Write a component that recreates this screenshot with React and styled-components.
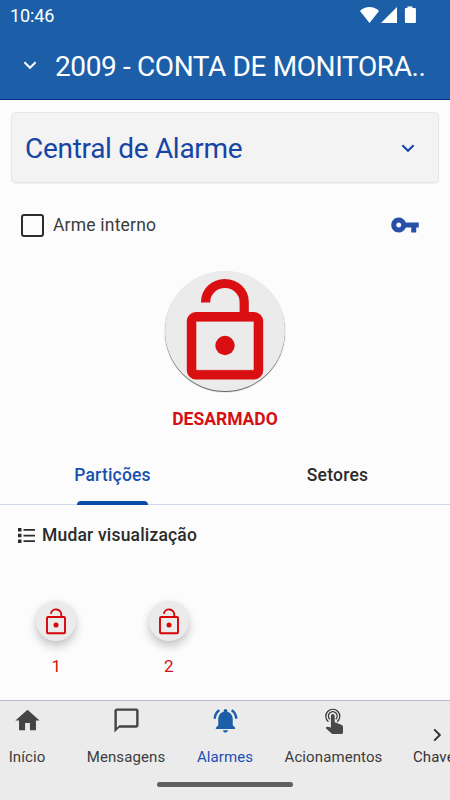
import React from "react";
import styled, { createGlobalStyle } from "styled-components";

const Global = createGlobalStyle`
  * { box-sizing: border-box; }
  html, body { margin: 0; overflow: hidden; background: #fcfcfc; }
  body { font-family: Roboto, sans-serif; color: #2b2b2b; }
  button { font: inherit; border: 0; background: none; padding: 0; margin: 0; color: inherit; }
  svg { display: block; flex: none; }
`;
const Screen = styled.div`
  width: 450px; height: 800px; display: flex; flex-direction: column; overflow: hidden; background: #fcfcfc;
`;
const Header = styled.header`
  height: 100px; flex: none; background: #1c5fa8; border-bottom: 1px solid #04308c; color: #fff;
`;
const StatusBar = styled.div`
  height: 31px; display: flex; justify-content: space-between; padding: 0 33px 0 10px;
`;
const Clock = styled.span`
  font-size: 18px; line-height: 31px; letter-spacing: -0.1px;
`;
const AccountBar = styled.div`
  height: 68px; display: flex; align-items: center; padding-left: 22px; gap: 17px;
`;
const Title = styled.h1`
  margin: 0; padding-top: 2px; font-size: 28px; font-weight: 400; line-height: 67px; letter-spacing: -0.38px; white-space: nowrap;
`;
const Body = styled.main`
  flex: 1; min-height: 0; display: flex; flex-direction: column;
`;
const PanelSelect = styled.button`
  margin: 12px 11px 0; height: 71px; flex: none; display: flex; align-items: center; justify-content: space-between;
  padding: 0 22px 0 13px; background: #f3f3f3; border: 1px solid #e6e6e6; border-radius: 5px; color: #1645a5;
  box-shadow: 0 1px 1px rgba(0,0,0,.05);
`;
const PanelName = styled.span`
  font-size: 28px; line-height: 67px; padding-top: 1px; font-weight: 400; letter-spacing: -0.3px;
`;
const OptionRow = styled.div`
  height: 60px; margin-top: 12px; flex: none; display: flex; align-items: center; justify-content: space-between;
  padding: 0 30px 0 21px;
`;
const CheckLabel = styled.label`
  display: flex; align-items: center; gap: 9px; font-size: 17.5px; font-weight: 400; letter-spacing: 0.2px; color: #3c3c3c;
`;
const CheckBox = styled.span`
  width: 23px; height: 23px; border: 2px solid #2c2c2c; border-radius: 3px;
`;
const KeyButton = styled.button`
  color: #2850a8;
`;
const ArmArea = styled.section`
  height: 195px; flex: none; display: flex; flex-direction: column; align-items: center; padding-top: 16px;
`;
const ArmButton = styled.button`
  width: 120px; height: 120px; flex: none; border-radius: 50%; background: #ebebeb; box-shadow: 0 1px 1px rgba(0,0,0,.65);
`;
const ArmState = styled.strong`
  margin-top: 17px; font-size: 17.5px; line-height: 22px; font-weight: 700; color: #d50f12;
`;
const Tabs = styled.nav`
  height: 55px; flex: none; display: grid; grid-template-columns: 1fr 1fr; box-shadow: inset 0 -1px #d0d8ec;
`;
const Tab = styled.button`
  display: flex; flex-direction: column; justify-content: space-between; align-items: center;
  font-size: 17.5px; line-height: 20px; font-weight: 500; letter-spacing: 0.2px; padding-top: 15px;
  color: ${(p) => (p.$active ? "#1850ae" : "#2b2b2b")};
  &::after {
    content: ""; width: 71px; height: 4px; border-radius: 4px 4px 0 0;
    background: ${(p) => (p.$active ? "#0b4ba8" : "transparent")};
  }
`;
const ViewToggle = styled.button`
  height: 60px; flex: none; display: flex; align-items: center; gap: 7px; padding-left: 18px;
  font-size: 17.5px; font-weight: 500; letter-spacing: 0.18px;
`;
const Partitions = styled.div`
  display: flex; padding: 36px 0 0;
`;
const Partition = styled.div`
  width: 112.5px; display: flex; flex-direction: column; align-items: center;
  font-size: 17px; line-height: 20px; color: #d50f12; gap: 15px;
`;
const PartitionButton = styled.button`
  width: 40px; height: 40px; border-radius: 50%; background: #ebebeb;
  box-shadow: 0 5px 10px rgba(0,0,0,.22), 0 0 3px rgba(0,0,0,.06);
`;
const BottomBar = styled.footer`
  height: 100px; flex: none; background: #ebebeb; border-top: 1px solid #b9b9d0; display: flex; flex-direction: column;
  align-items: center;
`;
const NavRow = styled.nav`
  width: 450px; height: 81px; display: grid; grid-template-columns: 54px 144px 54px 163px 35px; overflow: hidden;
`;
const NavItem = styled.button`
  display: flex; flex-direction: column; align-items: center; font-size: 15px; line-height: 18px; white-space: nowrap;
  padding-top: 5px; gap: 13px; letter-spacing: 0.1px; color: ${(p) => (p.$active ? "#1c5fa8" : "#444")};
`;
const NavText = styled.span`
  color: ${(p) => (p.$active ? "#1a4fb4" : "#3c3c3c")};
`;
const LastItem = styled.button`
  margin-left: -2px; display: flex; flex-direction: column; align-items: flex-start; font-size: 15px; line-height: 18px;
  white-space: nowrap; padding-top: 26px; color: #333; letter-spacing: 0.1px;
`;
const Next = styled.span`
  margin-left: 16px; height: 21px;
`;
const Handle = styled.div`
  width: 136px; height: 5px; border-radius: 3px; background: #5e5e5e;
`;

const icons = {
  home: "M10 20v-6h4v6h5v-8h3L12 3 2 12h3v8z",
  chat: "M20 2H4c-1.1 0-2 .9-2 2v18l4-4h14c1.1 0 2-.9 2-2V4c0-1.1-.9-2-2-2zm0 14H6l-2 2V4h16v12z",
  bell: "M7.58 4.08L6.15 2.65C3.75 4.48 2.17 7.3 2.03 10.5h2c.15-2.65 1.51-4.97 3.55-6.42zm12.39 6.42h2c-.15-3.2-1.73-6.02-4.12-7.85l-1.42 1.43c2.02 1.45 3.39 3.77 3.54 6.42zM18 11c0-3.07-1.64-5.64-4.5-6.32V4c0-.83-.67-1.5-1.5-1.5s-1.5.67-1.5 1.5v.68C7.63 5.36 6 7.92 6 11v5l-2 2v1h16v-1l-2-2v-5zm-6 11c.14 0 .27-.01.4-.04.65-.14 1.18-.58 1.44-1.18.1-.24.15-.5.15-.78h-4c.01 1.1.9 2 2.01 2z",
  key: "M12.65 10C11.83 7.67 9.61 6 7 6c-3.31 0-6 2.69-6 6s2.69 6 6 6c2.61 0 4.83-1.67 5.65-4H17v4h4v-4h2v-4H12.65zM7 14c-1.1 0-2-.9-2-2s.9-2 2-2 2 .9 2 2-.9 2-2 2z",
};
const Icon = ({ name, size = 29 }) => (
  <svg width={size} height={size} viewBox="0 0 24 24" fill="currentColor"><path d={icons[name]} /></svg>
);
const Chevron = ({ right }) => (
  <svg width="16" height="16" viewBox="0 0 16 16" fill="none" stroke="currentColor" strokeWidth="2">
    <path d={right ? "M5.2 2.4 10.8 8 5.2 13.6" : "M2.4 5.2 8 10.8 13.6 5.2"} />
  </svg>
);
const BigLock = () => (
  <svg width="120" height="120" viewBox="0 -0.5 120 120" fill="none" stroke="#d90f11" strokeWidth="9.2">
    <rect x="26.4" y="45.2" width="67.2" height="58.2" rx="4.5" />
    <path d="M40.6 31v-.5a19.3 18.5 0 0 1 38.6 0V45" />
    <path d="M31 49.8h58v49H31z" strokeWidth="0.6" />
    <circle cx="60" cy="74" r="9.7" fill="#d90f11" stroke="none" />
  </svg>
);
const SmallLock = () => (
  <svg width="40" height="40" viewBox="0 0 40 40" fill="none" stroke="#d50508" strokeWidth="1.9">
    <rect x="11" y="16" width="18" height="16.2" rx="1" />
    <path d="M14.8 12.7a5.3 5.3 0 0 1 10.5 1V16" />
    <circle cx="20" cy="24" r="2.5" fill="#d50508" stroke="none" />
  </svg>
);
const SystemIcons = () => (
  <svg width="57" height="31" viewBox="0 0 57 31" fill="#fff">
    <path d="M0 11C5 5.800 14 5.800 19 11L9.500 23z" />
    <path d="M21 23 37 7v16z" />
    <path d="M48 6.500h5v1.500h2.500q1 0 1 1V22q0 1-1 1h-9q-1 0-1-1V9q0-1 1-1H48z" transform="translate(-.6 0)" />
  </svg>
);
const ListIcon = () => (
  <svg width="17" height="15" viewBox="0 0 17 15" fill="#2b2b2b">
    <path d="M0 0h3.500v3.500H0zM0 5.700h3.500v3.500H0zM0 11.400h3.500V15H0zM5.500 1h11.500v1.700H5.500zM5.500 6.700h11.500v1.700H5.500zM5.500 12.300h11.500V14H5.500z" />
  </svg>
);
const Touch = () => (
  <svg width="29" height="29" viewBox="0 -0.5 29 29" fill="none" stroke="#333" strokeWidth="1.2">
    <path d="M9.400 15.200A7 7 0 1 1 18.200 15.200M10.800 12.800A4.400 4.400 0 1 1 16.800 12.800" />
    <path fill="#484848" stroke="none" d="M11.900 9.500a1.900 1.900 0 0 1 3.800 0v6.500h1.200l5.800 2.600q1.400.7 1.300 2v5.500q-.2 1.500-1.700 1.500h-8q-1 0-1.700-.7L6.600 21.500l1-1q.5-.5 1.200-.3l3.100.7z" />
  </svg>
);

export default function App() {
  return (
    <Screen>
      <Global />
      <Header>
        <StatusBar><Clock>10:46</Clock><SystemIcons /></StatusBar>
        <AccountBar><Chevron /><Title>2009 - CONTA DE MONITORA..</Title></AccountBar>
      </Header>
      <Body>
        <PanelSelect><PanelName>Central de Alarme</PanelName><Chevron /></PanelSelect>
        <OptionRow>
          <CheckLabel><CheckBox />Arme interno</CheckLabel>
          <KeyButton><Icon name="key" size={30} /></KeyButton>
        </OptionRow>
        <ArmArea><ArmButton><BigLock /></ArmButton><ArmState>DESARMADO</ArmState></ArmArea>
        <Tabs><Tab $active>Partições</Tab><Tab>Setores</Tab></Tabs>
        <ViewToggle><ListIcon />Mudar visualização</ViewToggle>
        <Partitions>
          {[1, 2].map((n) => (
            <Partition key={n}><PartitionButton><SmallLock /></PartitionButton>{n}</Partition>
          ))}
        </Partitions>
      </Body>
      <BottomBar>
        <NavRow>
          <NavItem><Icon name="home" /><NavText>Início</NavText></NavItem>
          <NavItem><Icon name="chat" /><NavText>Mensagens</NavText></NavItem>
          <NavItem $active><Icon name="bell" /><NavText $active>Alarmes</NavText></NavItem>
          <NavItem><Touch /><NavText>Acionamentos</NavText></NavItem>
          <LastItem><Next><Chevron right /></Next>Chave</LastItem>
        </NavRow>
        <Handle />
      </BottomBar>
    </Screen>
  );
}
